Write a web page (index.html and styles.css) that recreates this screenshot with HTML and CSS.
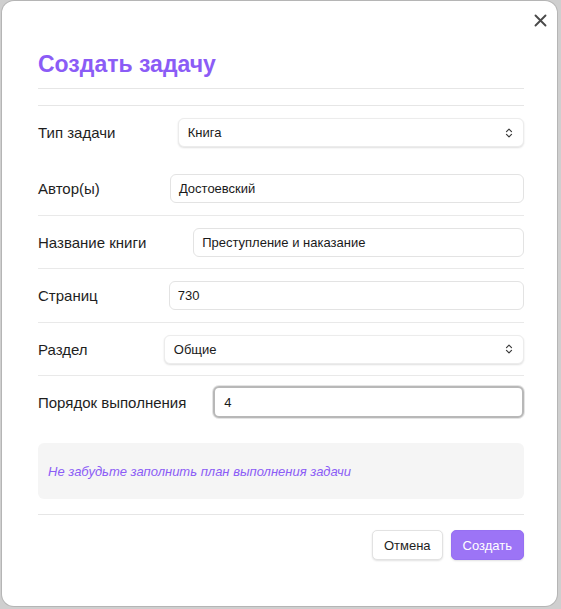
FILE: index.html
```html
<!DOCTYPE html>
<html lang="ru">
<head>
<meta charset="utf-8">
<title>Создать задачу</title>
<link rel="stylesheet" href="styles.css">
</head>
<body>
<div class="modal">
  <button class="close" aria-label="Закрыть">
    <svg width="13" height="13" viewBox="0 0 13 13"><path d="M1.5 1.5 L11.5 11.5 M11.5 1.5 L1.5 11.5" stroke="#4a4a4a" stroke-width="1.9" stroke-linecap="round" fill="none"/></svg>
  </button>
  <h1 class="title">Создать задачу</h1>
  <div class="divider"></div>
  <div class="row row-first">
    <span class="label">Тип задачи</span>
    <div class="field select"><span>Книга</span>
      <svg class="chev" width="8" height="12" viewBox="0 0 8 12"><path d="M1.5 4.6 L4 2.1 L6.5 4.6 M1.5 7.4 L4 9.9 L6.5 7.4" stroke="#3a3a3a" stroke-width="1.2" fill="none" stroke-linecap="round" stroke-linejoin="round"/></svg>
    </div>
  </div>
  <div class="row">
    <span class="label">Автор(ы)</span>
    <div class="field">Достоевский</div>
  </div>
  <div class="row">
    <span class="label">Название книги</span>
    <div class="field">Преступление и наказание</div>
  </div>
  <div class="row">
    <span class="label">Страниц</span>
    <div class="field">730</div>
  </div>
  <div class="row">
    <span class="label">Раздел</span>
    <div class="field select"><span>Общие</span>
      <svg class="chev" width="8" height="12" viewBox="0 0 8 12"><path d="M1.5 4.6 L4 2.1 L6.5 4.6 M1.5 7.4 L4 9.9 L6.5 7.4" stroke="#3a3a3a" stroke-width="1.2" fill="none" stroke-linecap="round" stroke-linejoin="round"/></svg>
    </div>
  </div>
  <div class="row row-last">
    <span class="label">Порядок выполнения</span>
    <div class="field focused">4</div>
  </div>
  <div class="note">Не забудьте заполнить план выполнения задачи</div>
  <div class="footer">
    <button class="btn btn-cancel">Отмена</button>
    <button class="btn btn-primary">Создать</button>
  </div>
</div>
</body>
</html>
```
FILE: styles.css
```css
html, body {
  margin: 0;
  padding: 0;
}
body {
  background: #cfcfcf;
  font-family: "Liberation Sans", Arial, Helvetica, sans-serif;
  color: #1e1e1e;
  padding: 1px 4px 3px 2px;
  height: 609px;
  box-sizing: border-box;
  overflow: hidden;
}
.modal {
  position: relative;
  background: #fff;
  border-radius: 12px;
  box-shadow: 0 0 0 1px rgba(0,0,0,0.12);
  height: 605px;
  box-sizing: border-box;
  padding: 51px 33px 0 36px;
}
.close {
  position: absolute;
  top: 12px;
  right: 9px;
  width: 15px;
  height: 15px;
  padding: 1px;
  border: 0;
  background: none;
  display: flex;
  align-items: center;
  justify-content: center;
}
.title {
  margin: 0;
  font-size: 23px;
  line-height: 25px;
  font-weight: bold;
  color: #8b5cf6;
  padding-bottom: 11px;
  border-bottom: 1px solid #e6e6e6;
}
.divider {
  margin-top: 16px;
  border-top: 1px solid #e6e6e6;
}
.row {
  display: flex;
  align-items: center;
  padding: 12px 0 11.5px;
  border-bottom: 1px solid #e9e9e9;
}
.row-first {
  border-bottom: 0;
  padding-bottom: 15px;
}
.row-last {
  border-bottom: 0;
  padding-top: 10px;
}
.label {
  flex: 1 1 auto;
  font-size: 15px;
  white-space: nowrap;
}
.field {
  flex: 1 1 284px;
  box-sizing: border-box;
  height: 29px;
  border: 1px solid #e3e3e3;
  border-radius: 6px;
  padding: 0 8px;
  font-size: 13px;
  display: flex;
  align-items: center;
  color: #1a1a1a;
  background: #fff;
}
.select {
  padding: 0 10px 0 9px;
  justify-content: space-between;
  border-color: #ececec;
  box-shadow: 0 1px 2px rgba(0,0,0,0.13);
}
.chev {
  display: block;
}
.focused {
  height: 32px;
  border: 2px solid #b8b8b8;
  padding-left: 9px;
  box-shadow: 0 0 0 1px #e4e4e4;
}
.note {
  margin-top: 13.5px;
  height: 56px;
  box-sizing: border-box;
  background: #f5f5f5;
  border-radius: 6px;
  padding: 0 10px;
  display: flex;
  align-items: center;
  font-size: 13px;
  font-style: italic;
  color: #8b5cf6;
}
.footer {
  margin-top: 15px;
  border-top: 1px solid #e6e6e6;
  padding-top: 15px;
  display: flex;
  justify-content: flex-end;
  gap: 8px;
}
.btn {
  height: 30px;
  border-radius: 5px;
  font-family: "Liberation Sans", Arial, Helvetica, sans-serif;
  font-size: 13px;
  padding: 0 11px;
  cursor: pointer;
}
.btn-cancel {
  background: #fff;
  color: #1e1e1e;
  border: 1px solid #e2e2e2;
  box-shadow: 0 1px 2px rgba(0,0,0,0.12);
}
.btn-primary {
  background: #9c74f6;
  color: #fff;
  border: 1px solid #9670f2;
  box-shadow: 0 1px 2px rgba(0,0,0,0.12);
}
```
